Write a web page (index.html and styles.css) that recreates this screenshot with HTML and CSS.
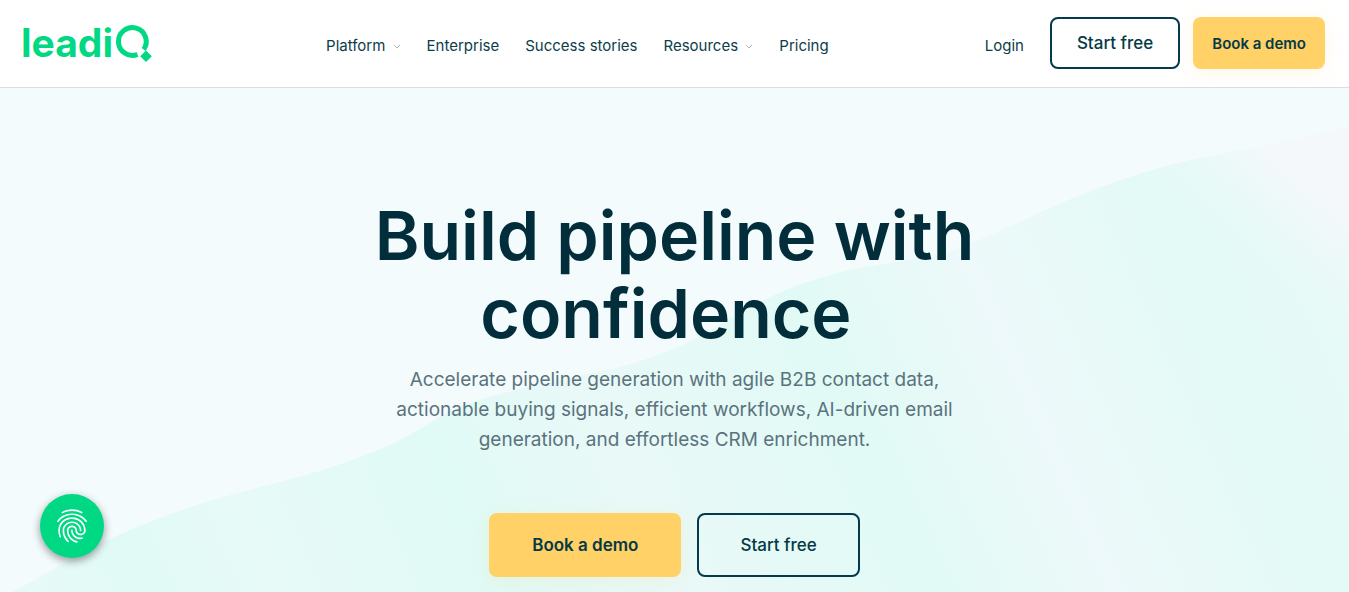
FILE: index.html
```html
<!DOCTYPE html>
<html lang="en">
<head>
<meta charset="utf-8">
<meta name="viewport" content="width=device-width, initial-scale=1">
<title>LeadIQ</title>
<link rel="stylesheet" href="styles.css">
</head>
<body>
<header class="header">
  <a class="logo" href="#" aria-label="LeadIQ home">
    <svg class="logo-mark" viewBox="0 0 128 40" aria-hidden="true">
      <text class="logo-text" x="-3" y="34">leadi</text>
      <path d="M113.500 31.400A13.900 13.900 0 1 1 119.700 26.500" class="logo-ring"/>
      <path d="M122 27.500l5.800 5.800-5.800 5.800-5.800-5.800z" class="logo-gem"/>
    </svg>
  </a>
  <nav class="nav" aria-label="Main">
    <a class="nav-link" href="#">Platform <svg class="chevron" viewBox="0 0 8 6" aria-hidden="true"><path d="M1 1l3 3 3-3"/></svg></a>
    <a class="nav-link" href="#">Enterprise</a>
    <a class="nav-link" href="#">Success stories</a>
    <a class="nav-link" href="#">Resources <svg class="chevron" viewBox="0 0 8 6" aria-hidden="true"><path d="M1 1l3 3 3-3"/></svg></a>
    <a class="nav-link" href="#">Pricing</a>
  </nav>
  <div class="actions">
    <a class="nav-link login" href="#">Login</a>
    <button class="btn btn-outline" type="button">Start free</button>
    <button class="btn btn-solid btn-compact" type="button">Book a demo</button>
  </div>
</header>
<main class="hero">
  <svg class="wave" viewBox="0 0 1349 504" preserveAspectRatio="none" aria-hidden="true">
    <defs>
      <linearGradient id="sweep" gradientUnits="userSpaceOnUse" x1="0" y1="504" x2="1349" y2="-96">
        <stop offset="0" stop-color="#e8faf8"/>
        <stop offset=".09" stop-color="#e1faf5"/>
        <stop offset=".17" stop-color="#e7faf7"/>
        <stop offset=".31" stop-color="#e0faf5"/>
        <stop offset=".42" stop-color="#e9f9f8"/>
        <stop offset=".58" stop-color="#e1faf5"/>
        <stop offset=".69" stop-color="#edf9fa"/>
        <stop offset=".82" stop-color="#e3faf6"/>
        <stop offset="1" stop-color="#eaf9f8"/>
      </linearGradient>
      <linearGradient id="dusk" gradientUnits="userSpaceOnUse" x1="1244" y1="170" x2="1306" y2="97">
        <stop offset="0" stop-color="#eaf9f9" stop-opacity="0"/>
        <stop offset="1" stop-color="#f4f8fb"/>
      </linearGradient>
    </defs>
    <g id="hill">
      <path fill="url(#sweep)" d="M12 504C50 486 75 463 155 432S270 400 344 375S430 330 465 317S560 292 602 283S680 260 706 245S780 195 861 180S940 168 972 155S1060 114 1093 102S1160 78 1205 69S1325 47 1349 38V504Z"/>
      <path fill="url(#dusk)" d="M1093 102C1126 88 1160 78 1205 69S1325 47 1349 38V504H1093Z"/>
    </g>
  </svg>
  <div class="hero-content">
    <h1 class="title">Build pipeline with confidence&nbsp;</h1>
    <p class="lead">Accelerate pipeline generation with agile B2B contact data, actionable buying signals, efficient workflows, AI-driven email generation, and effortless CRM enrichment.</p>
    <div class="cta">
      <button class="btn btn-solid btn-large" type="button">Book a demo</button>
      <button class="btn btn-outline btn-large-outline" type="button">Start free</button>
    </div>
  </div>
</main>
<button class="privacy" type="button" aria-label="Privacy settings">
  <svg class="privacy-icon" viewBox="0 0 24 24" aria-hidden="true"><path d="M17.810 4.470c-.08 0-.16-.02-.23-.06C15.660 3.420 14 3 12.010 3c-1.980 0-3.860.47-5.570 1.410-.24.13-.54.04-.68-.2-.13-.24-.04-.55.2-.68C7.820 2.520 9.860 2 12.010 2c2.130 0 3.990.47 6.030 1.520.25.13.34.43.21.67-.09.18-.26.28-.44.28zM3.500 9.720c-.1 0-.2-.03-.29-.09-.23-.16-.28-.47-.12-.7.99-1.400 2.250-2.500 3.750-3.270C9.980 4.040 14 4.030 17.150 5.650c1.500.77 2.760 1.860 3.750 3.250.16.22.11.54-.12.7-.23.16-.54.11-.7-.12-.9-1.260-2.040-2.250-3.390-2.940-2.870-1.470-6.540-1.470-9.400.01-1.360.7-2.500 1.700-3.400 2.960-.08.14-.23.21-.39.21zm6.250 12.070c-.13 0-.26-.05-.35-.15-.87-.87-1.340-1.430-2.010-2.640-.69-1.230-1.050-2.730-1.050-4.340 0-2.970 2.540-5.390 5.660-5.390s5.660 2.420 5.660 5.390c0 .28-.22.5-.5.5s-.5-.22-.5-.5c0-2.420-2.090-4.390-4.660-4.390-2.570 0-4.660 1.970-4.660 4.390 0 1.440.32 2.770.93 3.850.64 1.150 1.080 1.640 1.850 2.420.19.2.19.51 0 .71-.11.1-.24.15-.37.15zm7.170-1.850c-1.190 0-2.240-.3-3.100-.89-1.490-1.010-2.380-2.650-2.380-4.390 0-.28.22-.5.5-.5s.5.22.5.5c0 1.410.72 2.740 1.940 3.560.71.48 1.540.71 2.540.71.24 0 .64-.03 1.040-.1.27-.05.53.13.58.41.05.27-.13.53-.41.58-.57.11-1.070.12-1.210.12zM14.910 22c-.04 0-.09-.01-.13-.02-1.590-.44-2.630-1.030-3.720-2.100-1.400-1.390-2.170-3.240-2.170-5.220 0-1.620 1.380-2.940 3.080-2.940 1.700 0 3.080 1.320 3.080 2.940 0 1.070.93 1.940 2.080 1.940s2.080-.87 2.080-1.940c0-3.770-3.250-6.830-7.250-6.830-2.840 0-5.440 1.580-6.610 4.030-.39.81-.59 1.760-.59 2.800 0 .78.07 2.010.67 3.610.1.26-.03.55-.29.64-.26.1-.55-.04-.64-.29-.49-1.310-.73-2.610-.73-3.960 0-1.200.23-2.290.68-3.240 1.330-2.790 4.280-4.600 7.510-4.600 4.550 0 8.250 3.510 8.250 7.830 0 1.620-1.380 2.940-3.080 2.940s-3.080-1.320-3.080-2.940c0-1.070-.93-1.940-2.080-1.940s-2.080.87-2.080 1.940c0 1.710.66 3.310 1.870 4.510.95.94 1.860 1.460 3.270 1.850.27.07.42.35.35.61-.05.23-.26.38-.47.38z"/></svg>
</button>
</body>
</html>
```
FILE: styles.css
```css
* {
  box-sizing: border-box;
}

body {
  margin: 0;
  min-height: 100vh;
  display: flex;
  flex-direction: column;
  font-family: Inter, "Liberation Sans", sans-serif;
  color: #022d3a;
  background: #f3fbfd;
}

.header {
  display: flex;
  align-items: flex-start;
  justify-content: space-between;
  padding: 17px 24px 18px;
  background: #fff;
  border-bottom: 1px solid #d6e0e2;
}

.logo {
  padding-top: 6px;
}

.logo-mark {
  display: block;
  width: 128px;
  height: 40px;
  overflow: visible;
}

.logo-text {
  font-size: 39px;
  font-weight: 700;
  fill: #00d884;
}

.logo-ring {
  fill: none;
  stroke: #00d884;
  stroke-width: 5;
}

.logo-gem {
  fill: #00d884;
}

.nav {
  display: flex;
  gap: 26px;
  padding: 17px 0 0 18px;
}

.nav-link {
  font-size: 15px;
  line-height: 24px;
  color: #0b3d4a;
  text-decoration: none;
  white-space: nowrap;
}

.chevron {
  width: 8px;
  height: 6px;
  margin-left: 3px;
  vertical-align: 1px;
  fill: none;
  stroke: #a9bcc3;
}

.actions {
  display: flex;
}

.login {
  padding: 17px 26px 0 0;
}

.btn {
  height: 52px;
  padding: 0 25px;
  border: 2px solid #043a4c;
  border-radius: 8px;
  background: transparent;
  color: #043a46;
  font-family: inherit;
  font-size: 17px;
  font-weight: 500;
  cursor: pointer;
}

.btn-solid {
  border: 0;
  background: #ffd166;
  box-shadow: 0 4px 20px #ffd16626;
  font-weight: 600;
}

.btn-compact {
  margin-left: 13px;
  padding: 0 19px;
  font-size: 15px;
}

.hero {
  position: relative;
  flex: 1;
}

.wave {
  position: absolute;
  inset: 0;
  width: 100%;
  height: 100%;
}

.hero-content {
  position: relative;
  max-width: 640px;
  margin: 0 auto;
  padding: 108px 16px 15px;
  text-align: center;
}

.title {
  margin: 0;
  font-size: 68px;
  font-weight: 600;
  line-height: 78px;
}

.lead {
  margin: 13px 0 0;
  font-size: 19px;
  line-height: 30px;
  color: #5a737d;
}

.cta {
  display: flex;
  justify-content: center;
  gap: 16px;
  margin-top: 58px;
}

.btn-large {
  height: 64px;
  padding: 0 43px;
}

.btn-large-outline {
  height: 64px;
  padding: 0 41px;
}

.privacy {
  position: fixed;
  left: 40px;
  bottom: 34px;
  display: grid;
  place-items: center;
  width: 64px;
  height: 64px;
  padding: 0;
  border: 0;
  border-radius: 50%;
  background: #00d884;
  box-shadow: 0 3px 8px #0006;
  cursor: pointer;
}

.privacy-icon {
  width: 40px;
  height: 40px;
  fill: #fff;
}
```
